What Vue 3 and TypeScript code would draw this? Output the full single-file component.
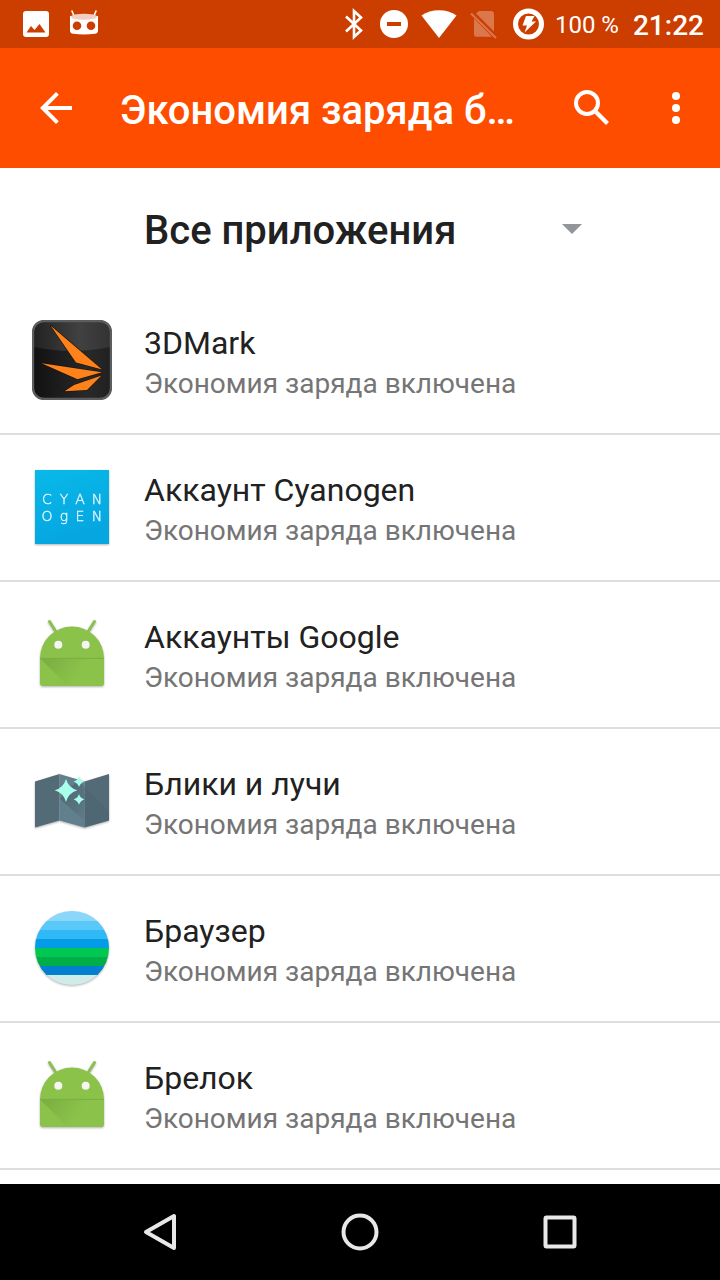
<script setup lang="ts">
import { ref } from 'vue'

type IconName = 'mark' | 'cyanogen' | 'android' | 'map' | 'browser'

interface AppEntry {
  name: string
  icon: IconName
}

const filter = ref('all')
const status = 'Экономия заряда включена'

const apps: AppEntry[] = [
  { name: '3DMark', icon: 'mark' },
  { name: 'Аккаунт Cyanogen', icon: 'cyanogen' },
  { name: 'Аккаунты Google', icon: 'android' },
  { name: 'Блики и лучи', icon: 'map' },
  { name: 'Браузер', icon: 'browser' },
  { name: 'Брелок', icon: 'android' },
]

const wordmark = [
  { letter: 'C', x: 15, y: 37 },
  { letter: 'Y', x: 32, y: 37 },
  { letter: 'A', x: 48, y: 37 },
  { letter: 'N', x: 65, y: 37 },
  { letter: 'O', x: 15, y: 54 },
  { letter: 'g', x: 32, y: 54 },
  { letter: 'E', x: 48, y: 54 },
  { letter: 'N', x: 65, y: 54 },
]

const stripes = [
  { y: 0, h: 13, fill: '#8bd7fb' },
  { y: 13, h: 9, fill: '#5ac8f8' },
  { y: 22, h: 9, fill: '#31b8f7' },
  { y: 31, h: 9, fill: '#049ce6' },
  { y: 40, h: 9, fill: '#00c853' },
  { y: 49, h: 9, fill: '#00ae47' },
  { y: 58, h: 9, fill: '#0280cf' },
  { y: 67, h: 13, fill: '#cfecea' },
]
</script>

<template>
  <div class="screen">
    <div class="status-bar">
      <div class="notifications">
        <svg width="32" height="32" viewBox="0 0 32 32" aria-hidden="true">
          <path fill="#fff" fill-rule="evenodd" d="M6 3h20a3 3 0 0 1 3 3v20a3 3 0 0 1-3 3H6a3 3 0 0 1-3-3V6a3 3 0 0 1 3-3zM6.500 24.500h19L19.500 16l-5 6-3.500-4z" />
        </svg>
        <svg width="32" height="32" viewBox="0 0 32 32" aria-hidden="true">
          <path d="M4 3l2 5M28 3l-2 5" stroke="#fff" stroke-width="1.600" stroke-linecap="round" />
          <path fill="#fff" fill-rule="evenodd" d="M2 9h28v14.500c0 2-1 3-3 3.300-7 .9-15 .9-22 0-2-.3-3-1.300-3-3.300zM9 14.400a4.300 4.300 0 1 0 0 8.600 4.300 4.300 0 0 0 0-8.600zM23 14.400a4.300 4.300 0 1 0 0 8.600 4.300 4.300 0 0 0 0-8.600z" transform="translate(0 -1)" />
          <ellipse cx="16" cy="8.700" rx="13" ry="3" fill="#f3cdbf" />
        </svg>
      </div>
      <div class="indicators">
        <svg width="40" height="32" viewBox="0 0 40 32" aria-hidden="true">
          <path d="M12 8.500l15 14-7 6.500V3l7 6.500-15 14" fill="none" stroke="#fff" stroke-width="2.600" />
        </svg>
        <svg width="40" height="32" viewBox="0 0 40 32" aria-hidden="true">
          <circle cx="20" cy="16" r="14" fill="#fff" />
          <path d="M13 16h14" stroke="#cc3d00" stroke-width="4" />
        </svg>
        <svg width="48" height="32" viewBox="0 0 48 32" aria-hidden="true">
          <path d="M25 30L7.500 7.500C17 .6 33 .6 42.500 7.500z" fill="#fff" />
        </svg>
        <svg width="40" height="32" viewBox="0 0 40 32" aria-hidden="true">
          <g fill="#db774d">
            <path d="M14 5.500L17 3h12q3 0 3 3v17.500zM12 10.500L30 28.800H14.500q-2.500 0-2.500-2.500z" />
            <path d="M9 5.500L34 30" stroke="#db774d" stroke-width="2" />
          </g>
        </svg>
        <svg width="52" height="32" viewBox="0 0 52 32" aria-hidden="true">
          <circle cx="26.500" cy="16" r="13" fill="none" stroke="#fff" stroke-width="5" />
          <path d="M24 8h8.500l-3 5.500H34L22.500 24.500l2.500-7h-4.500z" fill="#fff" />
        </svg>
        <span class="battery">100 %</span>
        <time class="clock">21:22</time>
      </div>
    </div>

    <header class="toolbar">
      <button class="icon-button" type="button" aria-label="Назад">
        <svg width="48" height="48" viewBox="0 0 24 24" aria-hidden="true">
          <path d="M20 11H7.830l5.590-5.590L12 4l-8 8 8 8 1.410-1.410L7.830 13H20z" fill="#fff" />
        </svg>
      </button>
      <h1 class="title">Экономия заряда батареи</h1>
      <button class="icon-button" type="button" aria-label="Поиск">
        <svg width="48" height="48" viewBox="0 0 24 24" aria-hidden="true">
          <circle cx="9.500" cy="9.500" r="5.500" fill="none" stroke="#fff" stroke-width="2" />
          <path d="M14 14l5.750 5.750" fill="none" stroke="#fff" stroke-width="2.100" />
        </svg>
      </button>
      <button class="icon-button" type="button" aria-label="Ещё">
        <svg width="48" height="48" viewBox="0 0 24 24" fill="#fff" aria-hidden="true">
          <circle cx="12" cy="6" r="2" />
          <circle cx="12" cy="12" r="2" />
          <circle cx="12" cy="18" r="2" />
        </svg>
      </button>
    </header>

    <main class="content">
      <div class="filter">
        <select v-model="filter" class="filter-select" aria-label="Фильтр приложений">
          <option value="all">Все приложения</option>
          <option value="excluded">Не экономят заряд</option>
        </select>
        <svg class="filter-arrow" width="20" height="12" viewBox="0 0 20 12" aria-hidden="true">
          <path d="M0 2h20L10 12z" fill="#92969b" />
        </svg>
      </div>

      <ul class="apps">
        <li v-for="app in apps" :key="app.name" class="app">
          <button class="app-button" type="button">
            <svg v-if="app.icon === 'mark'" class="app-icon" viewBox="0 0 80 80" aria-hidden="true">
              <defs>
                <linearGradient id="mark-gloss" x1="0" y1="0" x2="1" y2="0">
                  <stop offset="0" stop-color="#222" />
                  <stop offset=".6" stop-color="#414141" />
                  <stop offset="1" stop-color="#333" />
                </linearGradient>
                <linearGradient id="mark-base" x1="0" y1="0" x2="1" y2="0">
                  <stop offset="0" stop-color="#111" />
                  <stop offset=".7" stop-color="#292929" />
                  <stop offset="1" stop-color="#202020" />
                </linearGradient>
              </defs>
              <rect x="1" y="1" width="78" height="78" rx="11" fill="url(#mark-base)" />
              <path d="M2 27V12Q2 2 12 2h56q10 0 10 10v15Q40 35 2 27z" fill="url(#mark-gloss)" />
              <rect x="1" y="1" width="78" height="78" rx="11" fill="none" stroke="#5b5d5f" stroke-width="2.400" />
              <g fill="#ff8119" stroke="#17120d" stroke-width="1.200" paint-order="stroke">
                <path d="M18.500 5.500L70 49.500 44 42.500z" />
                <path d="M9.500 43.300L70 52.300 45.500 59.300z" />
                <path d="M69.500 55.500L55 70l-22.500 1.300L42 65z" />
              </g>
            </svg>

            <svg v-else-if="app.icon === 'cyanogen'" class="app-icon shadowed" viewBox="0 0 80 80" aria-hidden="true">
              <defs>
                <linearGradient id="cyanogen-base" x1="0" y1="0" x2=".3" y2="1">
                  <stop offset="0" stop-color="#08b9e8" />
                  <stop offset="1" stop-color="#06a6e1" />
                </linearGradient>
              </defs>
              <rect x="3" y="3" width="74" height="74" fill="url(#cyanogen-base)" />
              <g class="wordmark" fill="#e1f6fc" text-anchor="middle">
                <text v-for="(glyph, i) in wordmark" :key="i" :x="glyph.x" :y="glyph.y">{{ glyph.letter }}</text>
              </g>
            </svg>

            <svg v-else-if="app.icon === 'android'" class="app-icon shadowed" viewBox="0 0 80 80" aria-hidden="true">
              <defs>
                <linearGradient id="android-fold" gradientUnits="userSpaceOnUse" x1="10" y1="46" x2="42" y2="68">
                  <stop offset="0" stop-color="#6fa03c" />
                  <stop offset="1" stop-color="#8bc34a" />
                </linearGradient>
              </defs>
              <path d="M17.500 7.500l6 9.500M62.500 7.500l-6 9.500" stroke="#8bc051" stroke-width="3" stroke-linecap="round" />
              <path d="M8 44.500a32 32 0 0 1 64 0V69q0 3-3 3H11q-3 0-3-3z" fill="#8bc34a" />
              <path d="M8 44.500h64V69q0 3-3 3H36z" fill="url(#android-fold)" opacity=".6" />
              <path d="M8 44.300h64" stroke="#7bad43" stroke-width="1" />
              <circle cx="26.300" cy="30.700" r="4" fill="#f5f5f5" />
              <circle cx="53.700" cy="30.700" r="4" fill="#f5f5f5" />
            </svg>

            <svg v-else-if="app.icon === 'map'" class="app-icon shadowed" viewBox="0 0 80 80" aria-hidden="true">
              <defs>
                <linearGradient id="map-shade" x1="0" y1="0" x2="1" y2="1">
                  <stop offset="0" stop-color="#3e525c" />
                  <stop offset="1" stop-color="#5d7985" />
                </linearGradient>
              </defs>
              <path d="M3 20.500L27.500 13v46.500L3 66.500z" fill="#526b77" />
              <path d="M27.500 13l25 7.500v46l-25-7z" fill="#617f8c" />
              <path d="M52.500 20.500L77 13v46.500l-24.500 7z" fill="#526b77" />
              <path d="M28 38l6-9 13-9 5.500 6v34z" fill="url(#map-shade)" opacity=".6" />
              <path d="M52.500 26L77 50v9.500l-24.500 7z" fill="#4a626e" opacity=".35" />
              <g fill="#a7ffeb">
                <path d="M34 18q2.500 8.800 11.300 11.300Q36.500 32 34 41q-2.500-9-11.300-11.700Q31.500 26.800 34 18z" />
                <path d="M47 15.300q1.200 4.200 5.400 5.400-4.200 1.200-5.400 5.400-1.200-4.200-5.400-5.400 4.200-1.200 5.400-5.400z" />
                <path d="M47 33q1.200 4.200 5.400 5.400-4.200 1.200-5.400 5.400-1.200-4.200-5.400-5.400 4.200-1.200 5.400-5.400z" />
              </g>
            </svg>

            <svg v-else class="app-icon shadowed" viewBox="0 0 80 80" aria-hidden="true">
              <defs>
                <clipPath id="globe"><circle cx="40" cy="40" r="37" /></clipPath>
              </defs>
              <g clip-path="url(#globe)">
                <rect v-for="s in stripes" :key="s.y" x="0" :y="s.y" width="80" :height="s.h" :fill="s.fill" />
              </g>
            </svg>

            <span class="app-text">
              <span class="app-name">{{ app.name }}</span>
              <span class="app-status">{{ status }}</span>
            </span>
          </button>
        </li>
      </ul>
    </main>

    <nav class="nav-bar" aria-label="Системная навигация">
      <button class="nav-button" type="button" aria-label="Назад">
        <svg width="48" height="48" viewBox="0 0 48 48" aria-hidden="true">
          <path d="M38 8v32L10 24z" fill="none" stroke="#e8e8e8" stroke-width="4" stroke-linejoin="round" />
        </svg>
      </button>
      <button class="nav-button" type="button" aria-label="Домой">
        <svg width="48" height="48" viewBox="0 0 48 48" aria-hidden="true">
          <circle cx="24" cy="24" r="16.500" fill="none" stroke="#e8e8e8" stroke-width="4" />
        </svg>
      </button>
      <button class="nav-button" type="button" aria-label="Обзор">
        <svg width="48" height="48" viewBox="0 0 48 48" aria-hidden="true">
          <rect x="9.500" y="9.500" width="29" height="29" rx="1" fill="none" stroke="#e8e8e8" stroke-width="4" />
        </svg>
      </button>
    </nav>
  </div>
</template>

<style>
body {
  margin: 0;
  background: #fff;
}
</style>

<style scoped>
.screen {
  display: flex;
  flex-direction: column;
  height: 100vh;
  overflow: hidden;
  background: #fff;
  color: #212121;
  font-family: Roboto, "Noto Sans", sans-serif;
}

button {
  margin: 0;
  padding: 0;
  border: 0;
  background: none;
  color: inherit;
  font: inherit;
}

svg {
  display: block;
  flex: none;
}

.status-bar {
  display: flex;
  flex: none;
  align-items: center;
  justify-content: space-between;
  height: 48px;
  padding: 0 16px 0 20px;
  background: #cc3d00;
  color: #fff;
}

.notifications {
  display: flex;
  gap: 16px;
}

.indicators {
  display: flex;
  align-items: center;
}

.battery {
  margin: 0 14px 0 1px;
  padding-top: 2px;
  font-size: 24px;
  line-height: 32px;
}

.clock {
  padding-top: 4px;
  font-size: 28px;
  font-weight: 500;
  line-height: 32px;
}

.toolbar {
  display: flex;
  flex: none;
  align-items: center;
  height: 120px;
  padding: 0 20px 0 32px;
  background: #ff4d00;
  color: #fff;
}

.title {
  flex: 1;
  min-width: 0;
  margin: 0 48px 0 40px;
  padding-top: 5px;
  overflow: hidden;
  font-size: 40px;
  font-weight: 500;
  line-height: 48px;
  text-overflow: ellipsis;
  white-space: nowrap;
}

.icon-button + .icon-button {
  margin-left: 36px;
}

.content {
  flex: 1;
  min-height: 0;
  overflow: hidden;
}

.filter {
  display: grid;
  align-items: center;
  height: 120px;
  margin: 0 138px 0 144px;
}

.filter-select {
  grid-area: 1 / 1;
  box-sizing: border-box;
  width: 100%;
  height: 96px;
  padding: 4px 0 0;
  border: 0;
  appearance: none;
  background: none;
  color: #212121;
  font-family: inherit;
  font-size: 40px;
  font-weight: 500;
}

.filter-arrow {
  grid-area: 1 / 1;
  justify-self: end;
  pointer-events: none;
}

.apps {
  margin: 0;
  padding: 0;
  list-style: none;
}

.app {
  border-bottom: 2px solid #dedede;
}

.app-button {
  display: flex;
  align-items: center;
  box-sizing: border-box;
  width: 100%;
  min-height: 145px;
  padding: 0 32px 1px;
  gap: 32px;
  text-align: left;
}

.app-icon {
  width: 80px;
  height: 80px;
}

.shadowed {
  filter: drop-shadow(0 1px 1px rgba(0, 0, 0, 0.3));
}

.wordmark {
  font-family: "DejaVu Sans", sans-serif;
  font-size: 14px;
  font-weight: 200;
  stroke: #e1f6fc;
  stroke-width: 0.4px;
}

.app-text {
  display: flex;
  flex-direction: column;
  min-width: 0;
  padding-top: 8px;
}

.app-name {
  font-size: 32px;
  line-height: 40px;
}

.app-status {
  color: #757575;
  font-size: 28px;
  line-height: 42px;
}

.nav-bar {
  display: flex;
  flex: none;
  height: 96px;
  padding: 0 60px;
  background: #000;
}

.nav-button {
  display: flex;
  flex: 1;
  align-items: center;
  justify-content: center;
}
</style>
